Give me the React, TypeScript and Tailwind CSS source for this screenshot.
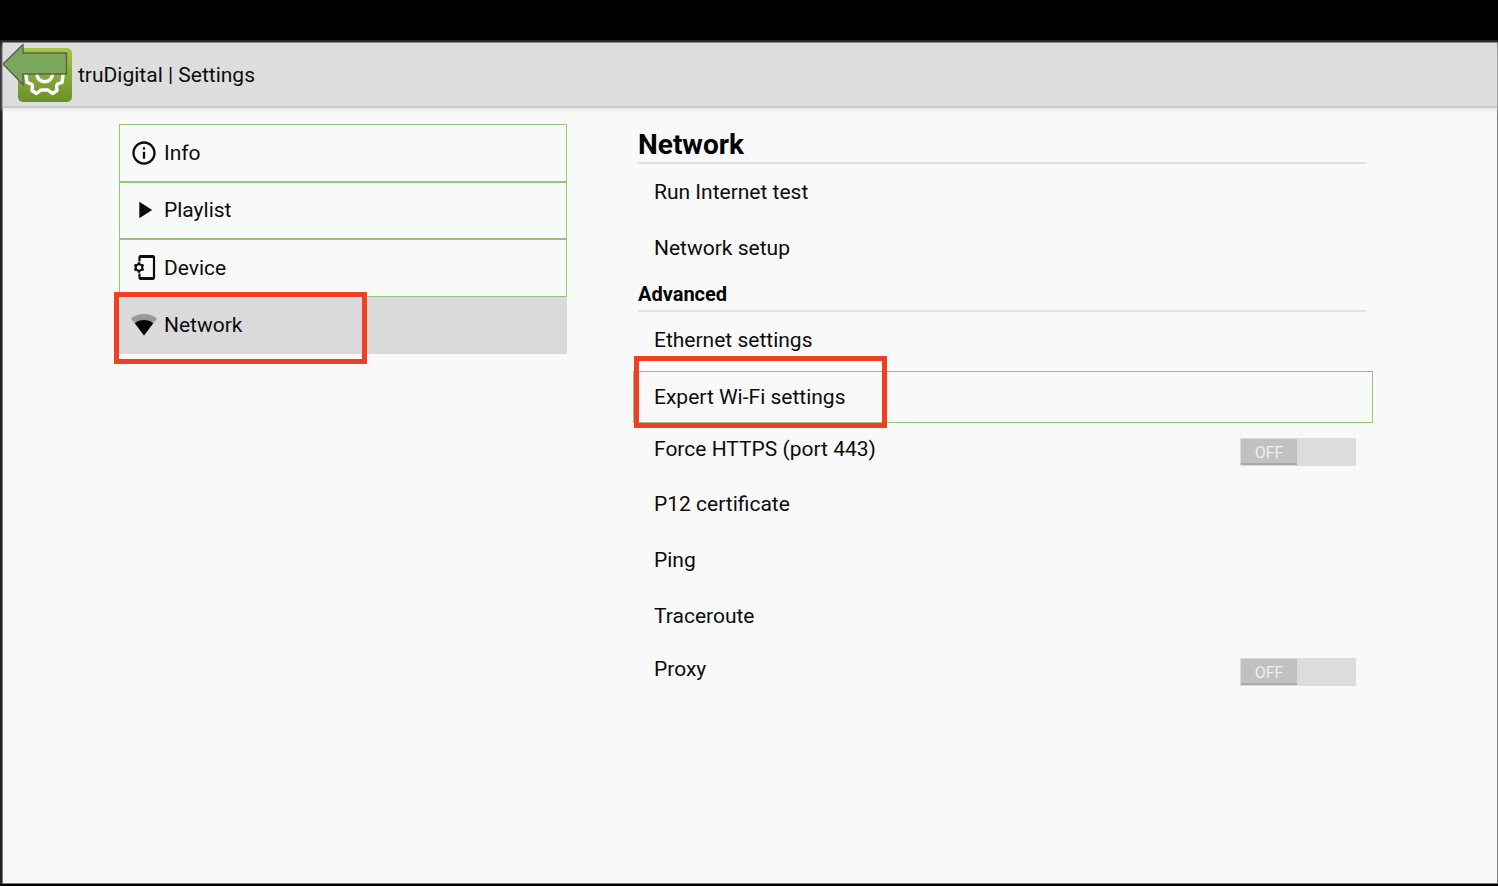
import { ReactNode } from "react";
import { MdInfoOutline, MdPlayArrow } from "react-icons/md";

function Highlight({ className }: { className: string }) {
  return (
    <span
      aria-hidden="true"
      className={`pointer-events-none absolute z-10 h-[72px] w-[253px] border-5 border-[#ee4023] ${className}`}
    />
  );
}

function WifiIcon() {
  return (
    <svg viewBox="0 0 26 22" className="h-[22px] w-[26px]" aria-hidden="true">
      <path d="M0 4.6C3.6 1.6 8.2 0 13 0s9.400 1.600 13 4.600L13 21.500z" fill="#999" />
      <path d="M3.800 9.200C6.400 7 9.600 6 13 6s6.600 1 9.200 3.200L13 21.500z" fill="#000" />
    </svg>
  );
}

function DeviceIcon() {
  return (
    <svg viewBox="0 0 28 28" className="h-7 w-7" fill="none" stroke="#0c0c0c" aria-hidden="true">
      <path d="M9.500 7.500V3.500a1.500 1.500 0 0 1 1.500-1.500h11.500a1.500 1.500 0 0 1 1.500 1.500v20a1.500 1.500 0 0 1-1.500 1.500H11a1.500 1.500 0 0 1-1.500-1.500V19.500" strokeWidth="2.200" />
      <path d="M9.500 2.800H24M9.500 24.200H24" strokeWidth="2.400" />
      <circle cx="9" cy="13.500" r="3.300" strokeWidth="2" />
      <path
        d="M9 8.200v2M9 16.800v2M4.400 10.900l1.700 1M11.900 15.100l1.700 1M4.400 16.100l1.700-1M11.900 11.900l1.700-1"
        strokeWidth="2.400"
      />
    </svg>
  );
}

function AppLogo() {
  return (
    <svg viewBox="1 1 71 62" className="h-[62px] w-[71px]" aria-hidden="true">
      <defs>
        <linearGradient id="logo-green" x1="0" y1="0" x2="0" y2="1">
          <stop offset="0" stopColor="#a3c644" />
          <stop offset="1" stopColor="#6b8f2a" />
        </linearGradient>
      </defs>
      <rect x="16" y="5" width="54" height="54" rx="5" fill="url(#logo-green)" />
      <g fill="none" stroke="#fff" strokeWidth="3.400" strokeLinejoin="round">
        <path d="M24 28v4l1 7.500 4.500 1.500 1 2.500-0.500 4 4.500 3 4.500-3.500h7l4.500 3.500 4.500-3-0.500-4 1-2.500 4.500-1.500 1-7.500v-4" />
        <circle cx="42.700" cy="31" r="7.800" />
      </g>
      <path
        d="M1 21L21 1.500v8.500h43.500v21H21v10.500z"
        fill="#7aa75c"
        stroke="#59634f"
        strokeWidth="1.400"
      />
    </svg>
  );
}

type NavItem = { label: string; icon: ReactNode; selected?: boolean };

const navItems: NavItem[] = [
  { label: "Info", icon: <MdInfoOutline size={28} /> },
  { label: "Playlist", icon: <MdPlayArrow size={28} /> },
  { label: "Device", icon: <DeviceIcon /> },
  { label: "Network", icon: <WifiIcon />, selected: true },
];

function Sidebar() {
  return (
    <nav aria-label="Settings sections">
      <ul className="flex h-[230px] flex-col">
        {navItems.map((item) => (
          <li key={item.label} className="relative flex flex-1">
            <button
              type="button"
              aria-current={item.selected ? "page" : undefined}
              className={`flex w-full items-center gap-1.5 border pl-[10px] text-left ${
                item.selected ? "border-[#dadada] bg-[#dadada]" : "border-[#98c37f]"
              }`}
            >
              <span className="flex w-7 justify-center">{item.icon}</span>
              {item.label}
            </button>
            {item.selected && <Highlight className="-left-[5px] -top-[5px]" />}
          </li>
        ))}
      </ul>
    </nav>
  );
}

function ActionRow({ label }: { label: string }) {
  return (
    <li>
      <button type="button" className="h-14 w-full px-4 text-left">
        {label}
      </button>
    </li>
  );
}

function SwitchRow({ label }: { label: string }) {
  return (
    <li>
      <label className="flex h-[52px] items-center justify-between pl-4 pr-[11px]">
        <span className="pb-0.5">{label}</span>
        <span className="relative mt-1 flex h-7 w-[116px] bg-[#dcdcdc] p-px">
          <input type="checkbox" role="switch" className="absolute inset-0 opacity-0" />
          <span className="flex w-14 items-center justify-center border-b-2 border-[#aaa] bg-[#c1c1c1] pt-1 text-base text-[#efefef]">
            OFF
          </span>
        </span>
      </label>
    </li>
  );
}

export default function App() {
  return (
    <div className="flex min-h-screen flex-col bg-black pb-0.5 font-['Roboto',sans-serif] text-[21px] leading-6 text-[#0c0c0c]">
      <div className="h-10" />
      <div className="flex grow flex-col border-l-2 border-t-2 border-[#242424]">
        <div className="flex grow flex-col border border-[#777] bg-[#f9f9f9]">
          <header className="flex h-[65px] items-center gap-1 border-b-2 border-[#c8c8c8] bg-[#dddddd] shadow-[0_2px_4px_#e4e4e4]">
            <button type="button" aria-label="Back">
              <AppLogo />
            </button>
            <h1>truDigital | Settings</h1>
          </header>
          <main className="grid grid-cols-[448fr_729fr] items-start gap-[71px] pl-[116px] pr-[130px] pt-4">
            <Sidebar />
            <div>
              <section>
                <h2 className="h-10 border-b-2 border-[#e2e2e2] text-[28px] font-bold leading-[42px] text-black">
                  Network
                </h2>
                <ul>
                  <ActionRow label="Run Internet test" />
                  <ActionRow label="Network setup" />
                </ul>
              </section>
              <section>
                <h3 className="h-9 border-b-2 border-[#e2e2e2] text-xl font-bold leading-9 text-black">
                  Advanced
                </h3>
                <ul>
                  <ActionRow label="Ethernet settings" />
                  <li className="relative -ml-[5px] -mr-1.5 pb-px pt-[3px]">
                    <button
                      type="button"
                      className="h-[52px] w-full border border-[#98c37f] px-5 text-left"
                    >
                      Expert Wi-Fi settings
                    </button>
                    <Highlight className="-top-3 left-px" />
                  </li>
                  <SwitchRow label="Force HTTPS (port 443)" />
                  <ActionRow label="P12 certificate" />
                  <ActionRow label="Ping" />
                  <ActionRow label="Traceroute" />
                  <SwitchRow label="Proxy" />
                </ul>
              </section>
            </div>
          </main>
        </div>
      </div>
    </div>
  );
}
